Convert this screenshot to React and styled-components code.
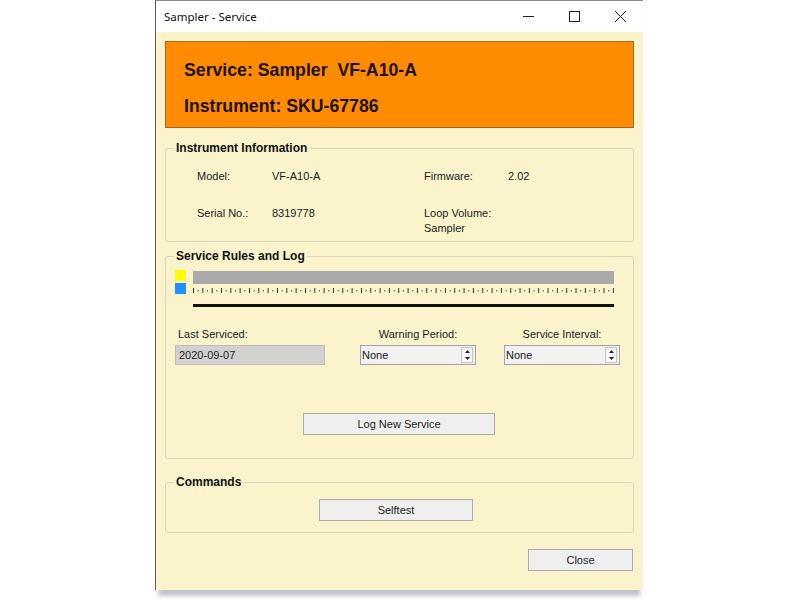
import React from 'react'
import styled, { createGlobalStyle } from 'styled-components'

const GlobalStyle = createGlobalStyle`
  html, body {
    margin: 0;
    padding: 0;
    background: #ffffff;
  }
  body {
    font-family: "Liberation Sans", Arial, sans-serif;
    color: #1b1b1b;
  }
`

const Page = styled.div`
  width: 800px;
  height: 600px;
  overflow: hidden;
  display: flex;
  align-items: flex-start;
  padding-left: 155px;
  box-sizing: border-box;
`

const Window = styled.div`
  width: 488px;
  height: 590px;
  box-sizing: border-box;
  border-left: 1px solid #5e5e5e;
  border-top: 1px solid #8a8a8a;
  display: flex;
  flex-direction: column;
  box-shadow: 0 9px 4px -3px rgba(120, 125, 140, 0.45);
`

const TitleBar = styled.div`
  height: 31px;
  flex: none;
  background: #ffffff;
  display: flex;
  align-items: center;
`

const Title = styled.span`
  flex: 1;
  padding-left: 8px;
  font-family: "Noto Sans", "Open Sans", sans-serif;
  font-size: 11.5px;
  color: #111;
`

const CaptionButton = styled.div`
  width: 46px;
  height: 31px;
  display: flex;
  align-items: center;
  justify-content: center;
`

const Body = styled.div`
  flex: 1;
  background: #faf3cc;
  padding: 9px 9px 0;
  display: flex;
  flex-direction: column;
`

const Banner = styled.div`
  height: 87px;
  box-sizing: border-box;
  background: #ff8c00;
  border: 1px solid #a06a25;
  padding: 10px 0 0 18px;
  font-size: 17.7px;
  font-weight: 700;
  line-height: 36px;
  color: #1c1204;
`

const Group = styled.fieldset`
  margin: ${p => p.$top}px 0 0;
  padding: 0;
  min-width: 0;
  border: 1px solid #ddd7be;
  border-radius: 3px;
`

const Legend = styled.legend`
  margin-left: 8px;
  padding: 0 2px;
  font-size: 12px;
  font-weight: 700;
  line-height: 14px;
  color: #111;
`

const InfoGrid = styled.div`
  display: grid;
  grid-template-columns: 75px 152px 84px 1fr;
  row-gap: 22px;
  padding: 14px 0 5px 31px;
  font-size: 11px;
  line-height: 15px;
`

const Cell = styled.div`
  white-space: pre-line;
`

const LogBox = styled.div`
  padding: 7px 19px 23px 9px;
  display: flex;
  flex-direction: column;
`

const Track = styled.div`
  display: flex;
  gap: 7px;
`

const Swatches = styled.div`
  display: flex;
  flex-direction: column;
  gap: 2px;
`

const Swatch = styled.div`
  width: 11px;
  height: 11px;
  background: ${p => p.$color};
`

const Timeline = styled.div`
  flex: 1;
  display: flex;
  flex-direction: column;
`

const Bar = styled.div`
  margin-top: 1px;
  height: 13px;
  background: #a9a9a9;
`

const Ticks = styled.svg`
  display: block;
  margin-top: 4px;
`

const Baseline = styled.div`
  margin-top: 11px;
  height: 3px;
  background: #111;
`

const FieldRow = styled.div`
  margin-top: 21px;
  display: flex;
`

const Field = styled.div`
  display: flex;
  flex-direction: column;
  margin-left: ${p => p.$gap || 0}px;
`

const FieldLabel = styled.div`
  font-size: 11px;
  line-height: 13px;
  height: 13px;
  margin-bottom: 4px;
  text-align: ${p => (p.$left ? 'left' : 'center')};
  padding-left: ${p => (p.$left ? 3 : 0)}px;
`

const DateBox = styled.div`
  width: 150px;
  height: 20px;
  box-sizing: border-box;
  background: #d1d1d1;
  border: 1px solid #bdbdbd;
  padding-left: 3px;
  font-size: 11px;
  line-height: 18px;
`

const Spin = styled.div`
  width: 116px;
  height: 20px;
  box-sizing: border-box;
  background: #f1f1f1;
  border: 1px solid #a2a2a2;
  padding-left: 1px;
  display: flex;
  align-items: center;
  font-size: 11px;
`

const SpinText = styled.span`
  flex: 1;
`

const Arrows = styled.div`
  width: 12px;
  height: 16px;
  margin-right: 2px;
  box-sizing: border-box;
  border: 1px solid #c4c4c4;
  background: #f7f7f7;
  display: flex;
  flex-direction: column;
  justify-content: space-around;
  align-items: center;
`

const ButtonRow = styled.div`
  margin-top: ${p => p.$top || 0}px;
  display: flex;
  justify-content: ${p => p.$align || 'center'};
  padding: ${p => p.$pad || '0'};
`

const Button = styled.button`
  width: ${p => p.$w}px;
  height: 22px;
  box-sizing: border-box;
  background: #efefef;
  border: 1px solid #adadad;
  border-radius: 0;
  padding: 0;
  font-family: "Liberation Sans", Arial, sans-serif;
  font-size: 11px;
  color: #1b1b1b;
`

const TickMarks = ({ width }) => {
  const step = 9.33
  const count = Math.floor((width - 1) / step) + 1
  const marks = []
  for (let i = 0; i < count; i++) {
    const x = 0.5 + i * step
    marks.push(<line key={'t' + i} x1={x} y1={0} x2={x} y2={5} stroke="#333" strokeWidth="1" />)
    if (x + step / 2 < width) {
      marks.push(<rect key={'d' + i} x={x + step / 2 - 0.5} y={2} width={1} height={1.5} fill="#555" />)
    }
  }
  return (
    <Ticks width={width} height={5}>
      {marks}
    </Ticks>
  )
}

const SpinArrows = () => (
  <Arrows>
    <svg width="5" height="3"><polygon points="0,3 5,3 2.5,0" fill="#222" /></svg>
    <svg width="5" height="3"><polygon points="0,0 5,0 2.5,3" fill="#222" /></svg>
  </Arrows>
)

const App = () => {
  return (
    <>
      <GlobalStyle />
      <Page>
        <Window>
          <TitleBar>
            <Title>Sampler - Service</Title>
            <CaptionButton>
              <svg width="11" height="11"><line x1="0" y1="5.5" x2="11" y2="5.5" stroke="#222" /></svg>
            </CaptionButton>
            <CaptionButton>
              <svg width="11" height="11"><rect x="0.5" y="0.5" width="10" height="10" fill="none" stroke="#222" /></svg>
            </CaptionButton>
            <CaptionButton>
              <svg width="11" height="11">
                <line x1="0" y1="0" x2="11" y2="11" stroke="#222" />
                <line x1="11" y1="0" x2="0" y2="11" stroke="#222" />
              </svg>
            </CaptionButton>
          </TitleBar>

          <Body>
            <Banner>
              <div>Service: Sampler&nbsp; VF-A10-A</div>
              <div>Instrument: SKU-67786</div>
            </Banner>

            <Group $top={13}>
              <Legend>Instrument Information</Legend>
              <InfoGrid>
                <Cell>Model:</Cell>
                <Cell>VF-A10-A</Cell>
                <Cell>Firmware:</Cell>
                <Cell>2.02</Cell>
                <Cell>Serial No.:</Cell>
                <Cell>8319778</Cell>
                <Cell>{'Loop Volume:\nSampler'}</Cell>
                <Cell />
              </InfoGrid>
            </Group>

            <Group $top={7}>
              <Legend>Service Rules and Log</Legend>
              <LogBox>
                <Track>
                  <Swatches>
                    <Swatch $color="#ffff00" />
                    <Swatch $color="#1e90ff" />
                  </Swatches>
                  <Timeline>
                    <Bar />
                    <TickMarks width={421} />
                    <Baseline />
                  </Timeline>
                </Track>

                <FieldRow>
                  <Field>
                    <FieldLabel $left>Last Serviced:</FieldLabel>
                    <DateBox>2020-09-07</DateBox>
                  </Field>
                  <Field $gap={35}>
                    <FieldLabel>Warning Period:</FieldLabel>
                    <Spin>
                      <SpinText>None</SpinText>
                      <SpinArrows />
                    </Spin>
                  </Field>
                  <Field $gap={28}>
                    <FieldLabel>Service Interval:</FieldLabel>
                    <Spin>
                      <SpinText>None</SpinText>
                      <SpinArrows />
                    </Spin>
                  </Field>
                </FieldRow>

                <ButtonRow $top={48} $pad="0 0 0 9px">
                  <Button $w={192}>Log New Service</Button>
                </ButtonRow>
              </LogBox>
            </Group>

            <Group $top={16}>
              <Legend>Commands</Legend>
              <ButtonRow $pad="10px 7px 11px 0">
                <Button $w={154}>Selftest</Button>
              </ButtonRow>
            </Group>

            <ButtonRow $top={16} $align="flex-end" $pad="0 1px 0 0">
              <Button $w={105}>Close</Button>
            </ButtonRow>
          </Body>
        </Window>
      </Page>
    </>
  )
}

export default App
